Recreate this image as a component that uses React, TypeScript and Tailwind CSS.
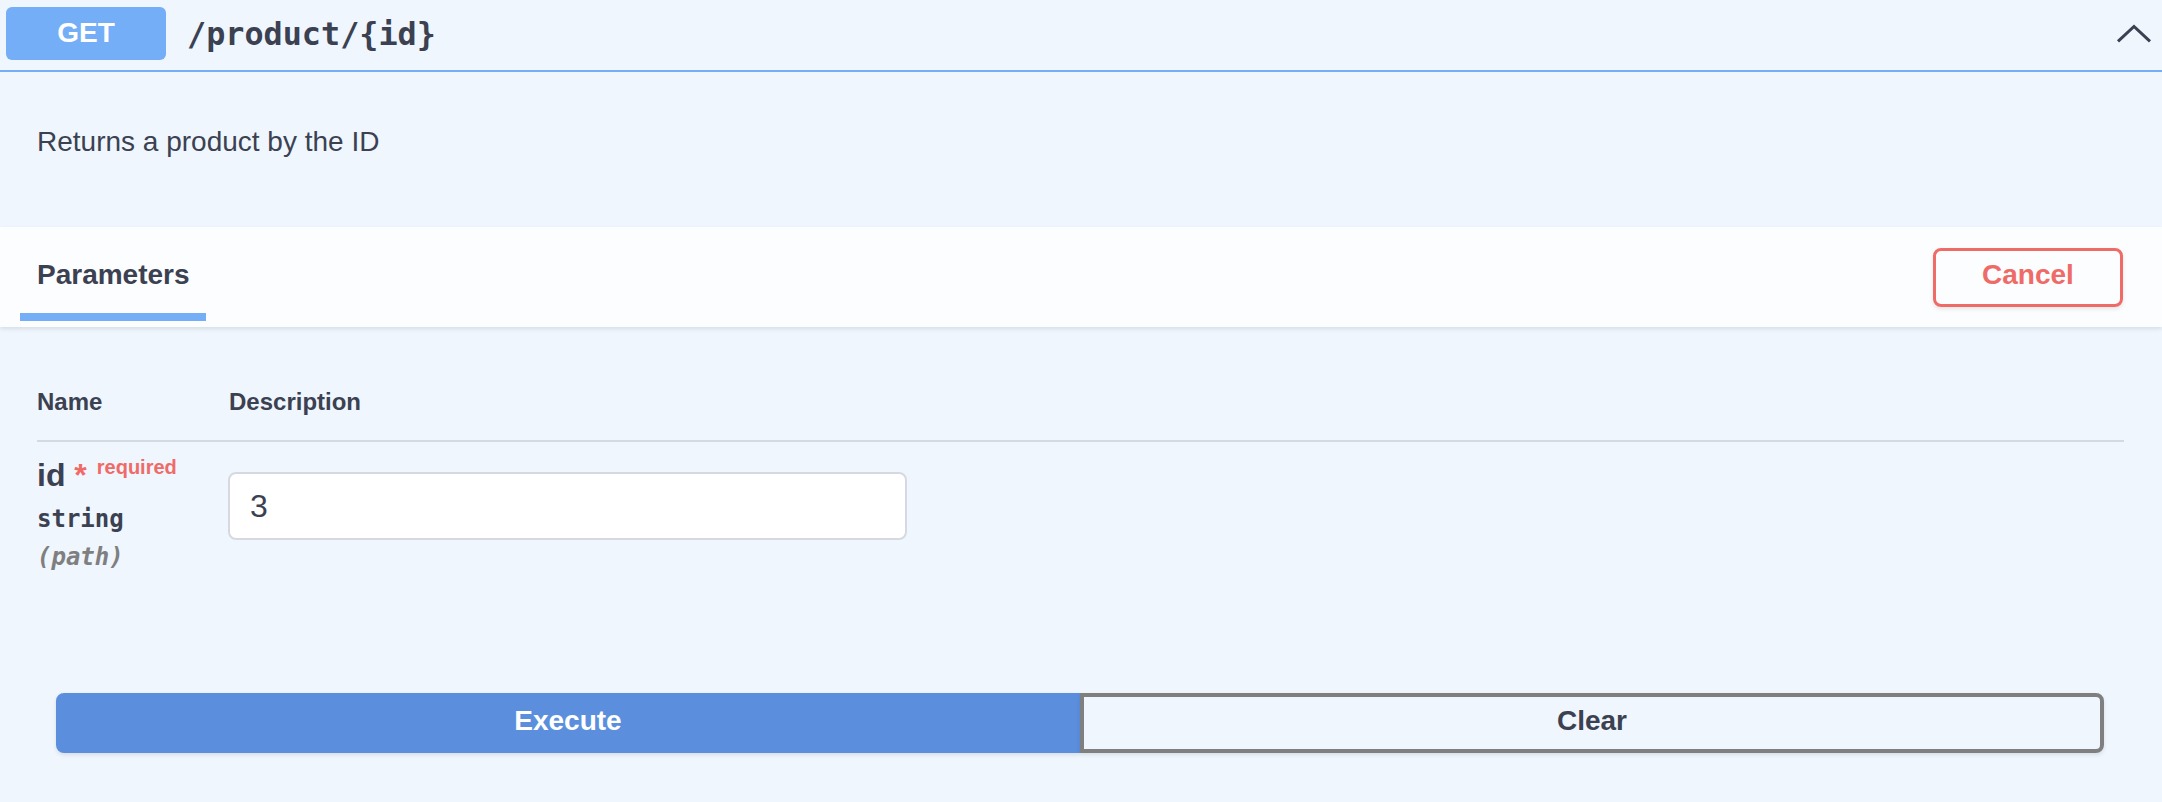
import React from "react";

const sans = "font-['Liberation_Sans',Arial,sans-serif]";
const mono = "font-['DejaVu_Sans_Mono',Menlo,monospace]";

function ChevronUp() {
  return (
    <svg width="36" height="20" viewBox="0 0 36 20" className="ml-auto shrink-0" aria-hidden>
      <polyline
        points="2,17.3 18,2.5 34,17.3"
        fill="none"
        stroke="#3b4151"
        strokeWidth="3"
      />
    </svg>
  );
}

export default function App() {
  return (
    <div className={`min-h-screen w-full bg-[#eff6fe] text-[#3b4151] ${sans}`}>
      {/* summary bar */}
      <div className="flex h-[72px] items-center border-b-2 border-[#74aef6] pb-[3px] pl-[6px] pr-[10px]">
        <span className="flex h-[53px] w-[160px] shrink-0 items-center justify-center rounded-[6px] bg-[#74aef6] pb-[2px] text-[28px] leading-none font-bold text-white">
          GET
        </span>
        <span className={`ml-[21px] text-[31.8px] leading-none font-bold ${mono}`}>
          /product/{"{id}"}
        </span>
        <ChevronUp />
      </div>

      {/* description */}
      <div className="h-[155px] pl-[37px] pt-[54px]">
        <p className="text-[28px] leading-[32px]">Returns a product by the ID</p>
      </div>

      {/* section header */}
      <div className="relative flex h-[100px] items-center justify-between bg-[#fcfdff] pl-[37px] pr-[39px] shadow-[0_2px_4px_rgba(0,0,0,0.1)]">
        <h4 className="mb-[4px] text-[28px] leading-[32px] font-bold">
          <span className="relative">
            Parameters
            <span className="absolute left-[-17px] right-[-16px] top-[54px] h-[8px] bg-[#74aef6]" />
          </span>
        </h4>
        <button className="h-[59px] w-[190px] rounded-[8px] border-[3px] border-[#ef6b67] pb-[4px] text-[28px] leading-none font-bold text-[#ef6b67] shadow-[0_2px_4px_rgba(0,0,0,0.1)]">
          Cancel
        </button>
      </div>

      {/* parameters table */}
      <div className="pl-[37px] pr-[38px] pt-[61px]">
        <div className="flex border-b-2 border-[#d5dae2] pb-[24px] text-[24px] leading-[28px] font-bold">
          <div className="w-[192px] shrink-0">Name</div>
          <div>Description</div>
        </div>
        <div className="flex">
          <div className="w-[191px] shrink-0 pt-[15px]">
            <div className="text-[32px] leading-[37px] font-bold whitespace-nowrap">
              id<span className="text-[#ef6b67]">&nbsp;*</span>
              <span className="relative top-[-12px] px-[10px] text-[20px] text-[#ef6b67]">required</span>
            </div>
            <div className={`pb-[10px] pt-[7px] text-[24px] leading-[28px] font-bold ${mono}`}>string</div>
            <div className={`text-[24px] leading-[28px] font-bold italic text-[#7f7f7f] ${mono}`}>(path)</div>
          </div>
          <div className="pt-[30px]">
            <input
              type="text"
              defaultValue="3"
              className={`h-[68px] w-[679px] rounded-[8px] border-2 border-[#d6dae0] bg-white pl-[20px] text-[32px] text-[#3b4151] outline-none ${sans}`}
            />
          </div>
        </div>
      </div>

      {/* execute / clear */}
      <div className="mt-[122px] flex pl-[56px] pr-[58px]">
        <button className="h-[60px] flex-1 rounded-l-[8px] border-4 border-[#5b8fdd] bg-[#5b8fdd] pb-[4px] text-[28px] leading-none font-bold text-white shadow-[0_2px_4px_rgba(0,0,0,0.1)]">
          Execute
        </button>
        <button className="h-[60px] flex-1 rounded-r-[8px] border-4 border-[#7f7f7f] pb-[4px] text-[28px] leading-none font-bold text-[#3b4151] shadow-[0_2px_4px_rgba(0,0,0,0.1)]">
          Clear
        </button>
      </div>
    </div>
  );
}
